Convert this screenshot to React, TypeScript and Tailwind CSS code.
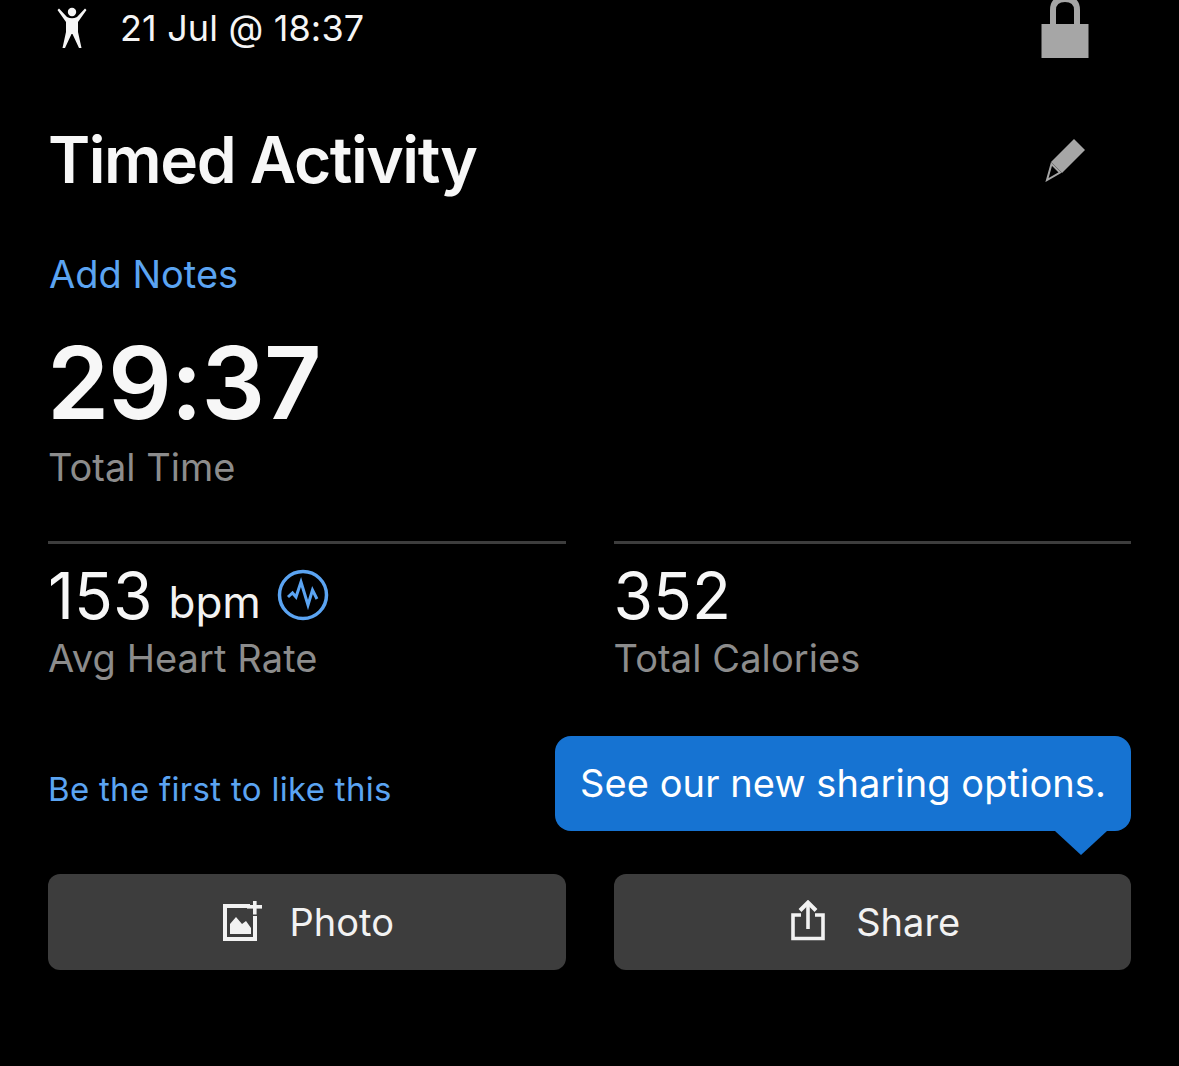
import React from "react";

const font = { fontFamily: "Inter, 'Noto Sans', sans-serif" };

function Figure() {
  return (
    <svg width="36" height="42" viewBox="0 0 36 42" fill="#f5f5f5">
      <circle cx="18" cy="5" r="4.2" />
      <path d="M3.5 3 L5 1.5 L13 10 Q18 12.5 23 10 L31 1.5 L32.5 3 L24 15 L24 25 L27.5 41 L25 41 L18.5 27 L17.5 27 L11 41 L8.5 41 L12 25 L12 15 Z" />
    </svg>
  );
}

function Lock() {
  return (
    <svg width="48" height="58" viewBox="0 0 48 58">
      <path d="M12 26 V10 Q12 -1 24 -1 Q36 -1 36 10 V26" fill="none" stroke="#a6a6a6" strokeWidth="6" />
      <rect x="0.5" y="24" width="47" height="34" fill="#a6a6a6" />
    </svg>
  );
}

function Pencil() {
  return (
    <svg width="42" height="44" viewBox="0 0 42 44">
      <path d="M29 1 L40 12 L17 35 L6 24 Z" fill="#a6a6a6" />
      <path d="M6.5 26 L15 34.5 L2 42 Z" fill="none" stroke="#a6a6a6" strokeWidth="2" />
      <path d="M5 38 L7.5 30 L11 34 Z" fill="#000" />
    </svg>
  );
}

function Pulse() {
  return (
    <svg width="52" height="52" viewBox="0 0 52 52" fill="none" stroke="#5ba4f2">
      <circle cx="26" cy="26" r="23.5" strokeWidth="3.5" />
      <path d="M11 28 L15.5 24 L19 28 L24 13 L31 36 L35.5 21 L40 30" strokeWidth="3" strokeLinejoin="miter" />
    </svg>
  );
}

function PhotoIcon() {
  return (
    <svg width="40" height="42" viewBox="0 0 40 42">
      <path d="M27 5 H2 V38 H32 V15" fill="none" stroke="#f2f2f2" strokeWidth="4" />
      <path d="M7 33 V23 L13 16 L19 23 L23 20 L28 27 V33 Z" fill="#f2f2f2" />
      <rect x="24" y="4" width="15" height="3.6" fill="#f2f2f2" />
      <rect x="30" y="-2" width="3.6" height="15.5" fill="#f2f2f2" />
    </svg>
  );
}

function ShareIcon() {
  return (
    <svg width="34" height="44" viewBox="0 0 34 44" fill="none" stroke="#f2f2f2">
      <path d="M10 15 H2 V38.5 H32 V15 H24" strokeWidth="3.6" />
      <path d="M17 29 V4" strokeWidth="3.6" />
      <path d="M9 10.5 L17 2.5 L25 10.5" strokeWidth="4" />
    </svg>
  );
}

function Stat({ value, unit, label, icon }: { value: string; unit?: string; label: string; icon?: boolean }) {
  return (
    <div className="flex-1 border-t-[3px] border-[#3d3d3d]">
      <div className="flex h-[102px] items-center pt-[2px]">
        <span className="text-[64px] leading-none text-[#f7f7f7]">{value}</span>
        {unit && <span className="ml-[16px] mt-[12px] text-[44px] leading-none text-[#f2f2f2]">{unit}</span>}
        {icon && <span className="ml-[16px] -mt-[2px]"><Pulse /></span>}
      </div>
      <div className="-mt-[12px] text-[38px] leading-[48px] tracking-[0.1px] text-[#8c8c8c]">{label}</div>
    </div>
  );
}

function ActionButton({ children, label, inner }: { children: React.ReactNode; label: string; inner: string }) {
  return (
    <button className="flex h-[96px] flex-1 items-center justify-center rounded-[12px] bg-[#3d3d3d] text-[38px] text-[#f2f2f2]">
      <div className={`flex items-center ${inner}`}>
        {children}
        <span>{label}</span>
      </div>
    </button>
  );
}

export default function App() {
  return (
    <div className="h-[1066px] w-[1179px] overflow-hidden bg-black px-12" style={font}>
      <header className="flex h-[58px] items-start justify-between pr-[42px]">
        <div className="flex items-center pl-[6px] pt-[7px]">
          <Figure />
          <span className="ml-[30px] text-[36px] leading-[42px] tracking-[0.15px] text-[#f5f5f5]">21 Jul @ 18:37</span>
        </div>
        <Lock />
      </header>

      <div className="mt-[60px] flex items-center justify-between pr-[44px]">
        <h1 className="text-[64px] font-semibold leading-[84px] tracking-[-1.45px] text-[#f7f7f7]">Timed Activity</h1>
        <Pencil />
      </div>

      <div className="mt-[49px] pl-px text-[38px] leading-[46px] text-[#5ba4f2]">Add Notes</div>
      <div className="-ml-px mt-[31px] text-[100px] font-semibold leading-[110px] tracking-[-1.2px] text-[#f7f7f7]">29:37</div>
      <div className="mt-[5px] text-[38px] leading-[48px] text-[#8c8c8c]">Total Time</div>

      <div className="mt-[50px] flex gap-12">
        <Stat value="153" unit="bpm" label="Avg Heart Rate" icon />
        <Stat value="352" label="Total Calories" />
      </div>

      <div className="relative mt-[83px] h-[48px] text-[33px] leading-[48px] tracking-[0.3px] text-[#5ba4f2]">
        Be the first to like this
        <div className="absolute bottom-[-18px] right-0 flex h-[95px] w-[576px] items-center justify-center rounded-[16px] bg-[#1673d2] text-[38px] tracking-[0.08px] text-white">
          <span className="-mt-[1px]">See our new sharing options.</span>
          <div className="absolute -bottom-[24px] right-[24px] h-0 w-0 border-x-[26px] border-t-[24px] border-x-transparent border-t-[#1673d2]" />
        </div>
      </div>

      <div className="mt-[61px] flex gap-12">
        <ActionButton label="Photo" inner="gap-[27px] pl-[3px]"><PhotoIcon /></ActionButton>
        <ActionButton label="Share" inner="gap-[31px] pl-[7px]"><ShareIcon /></ActionButton>
      </div>
    </div>
  );
}
